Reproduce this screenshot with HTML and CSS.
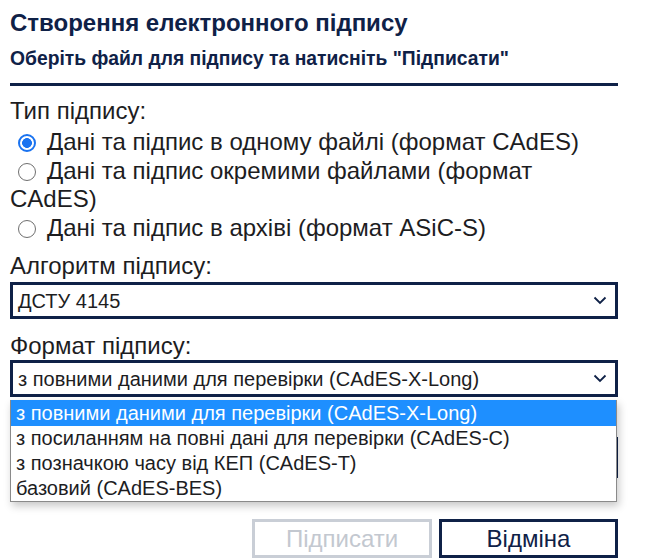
FILE: index.html
```html
<!DOCTYPE html>
<html lang="uk">
<head>
<meta charset="utf-8">
<title>Створення електронного підпису</title>
<link rel="stylesheet" href="styles.css">
</head>
<body>
<div class="page">
  <h1 class="title">Створення електронного підпису</h1>
  <h2 class="subtitle">Оберіть файл для підпису та натисніть "Підписати"</h2>
  <div class="rule"></div>

  <div class="label label-type">Тип підпису:</div>
  <div class="radios">
    <label class="radio"><input type="radio" name="t" checked>Дані та підпис в одному файлі (формат CAdES)</label>
    <label class="radio"><input type="radio" name="t">Дані та підпис окремими файлами (формат CAdES)</label>
    <label class="radio"><input type="radio" name="t">Дані та підпис в архіві (формат ASiC-S)</label>
  </div>

  <div class="label label-alg">Алгоритм підпису:</div>
  <div class="select select-alg">
    <span class="select-value">ДСТУ 4145</span>
    <svg class="chev" width="14" height="9" viewBox="0 0 14 9"><path d="M1.5 1.5 L7 7 L12.5 1.5" fill="none" stroke="#0f2147" stroke-width="1.8"/></svg>
  </div>

  <div class="label label-fmt">Формат підпису:</div>
  <div class="select-wrap">
    <div class="select">
      <span class="select-value">з повними даними для перевірки (CAdES-X-Long)</span>
      <svg class="chev" width="14" height="9" viewBox="0 0 14 9"><path d="M1.5 1.5 L7 7 L12.5 1.5" fill="none" stroke="#0f2147" stroke-width="1.8"/></svg>
    </div>
    <ul class="dropdown">
      <li class="opt opt-active">з повними даними для перевірки (CAdES-X-Long)</li>
      <li class="opt">з посиланням на повні дані для перевірки (CAdES-C)</li>
      <li class="opt">з позначкою часу від КЕП (CAdES-T)</li>
      <li class="opt">базовий (CAdES-BES)</li>
    </ul>
  </div>

  <div class="hidden-field"></div>

  <div class="actions">
    <button class="btn btn-disabled" disabled>Підписати</button>
    <button class="btn btn-cancel">Відміна</button>
  </div>
</div>
</body>
</html>
```

FILE: styles.css
```css
html, body {
  margin: 0;
  padding: 0;
  background: #ffffff;
}

body {
  font-family: "Liberation Sans", Arial, sans-serif;
  color: #1d1d1f;
  overflow: hidden;
}

.page {
  width: 608px;
  padding: 9px 0 0 10px;
}

.title {
  margin: 0;
  font-size: 24px;
  line-height: 28px;
  font-weight: bold;
  color: #0f2147;
}

.subtitle {
  margin: 11px 0 0;
  font-size: 19.3px;
  line-height: 22px;
  font-weight: bold;
  color: #0f2147;
}

.rule {
  margin-top: 13px;
  height: 3px;
  background: #0f2147;
}

.label {
  font-size: 24px;
  line-height: 28px;
}

.label-type {
  margin-top: 11px;
  margin-bottom: 3px;
}

.radios {
  font-size: 24px;
  line-height: 28.5px;
}

.radio {
  display: block;
}

.radio input {
  -webkit-appearance: none;
  appearance: none;
  box-sizing: border-box;
  width: 18px;
  height: 18px;
  margin: 0 11px 0 8px;
  border: 1.5px solid #6f6f6f;
  border-radius: 50%;
  background: #fff;
  vertical-align: -2px;
}

.radio input:checked {
  border: 2px solid #1a73f0;
  background: radial-gradient(circle, #1a73f0 0 4.6px, #fff 5.2px);
}

.label-alg {
  margin-top: 10px;
}

.label-fmt {
  margin-top: 13px;
}

.select {
  box-sizing: border-box;
  height: 37px;
  border: 3px solid #0f2147;
  display: flex;
  align-items: center;
  justify-content: space-between;
  padding: 0 8px 0 5px;
  font-size: 20px;
  color: #1d1d1f;
  background: #fff;
}

.select-alg {
  margin-top: 2px;
}

.select-value {
  line-height: 22px;
  padding-top: 1px;
}

.chev {
  display: block;
}

.select-wrap {
  position: relative;
}

.dropdown {
  position: absolute;
  left: 0;
  right: 1px;
  top: calc(100% + 3px);
  margin: 0;
  padding: 0;
  list-style: none;
  background: #fff;
  border: 1px solid #8a8a8a;
  border-top: 0;
  box-shadow: 2px 4px 8px rgba(0, 0, 0, 0.22);
  z-index: 2;
}

.opt {
  height: 25px;
  line-height: 25px;
  padding-left: 5px;
  font-size: 20px;
  color: #1d1d1f;
  white-space: nowrap;
}

.opt-active {
  height: 26px;
  line-height: 26px;
  background: #1e8fff;
  color: #ffffff;
}

.hidden-field {
  box-sizing: border-box;
  margin-top: 40px;
  height: 41px;
  border: 3px solid #0f2147;
}

.actions {
  margin-top: 41px;
  display: flex;
  justify-content: flex-end;
  gap: 7px;
}

.btn {
  box-sizing: border-box;
  height: 39px;
  width: 180px;
  background: #fff;
  font-family: "Liberation Sans", Arial, sans-serif;
  font-size: 24px;
  padding: 0;
}

.btn-disabled {
  border: 3px solid #c9ced6;
  color: #c3c8d0;
}

.btn-cancel {
  width: 179px;
  border: 3px solid #0f2147;
  color: #0f2147;
}
```
